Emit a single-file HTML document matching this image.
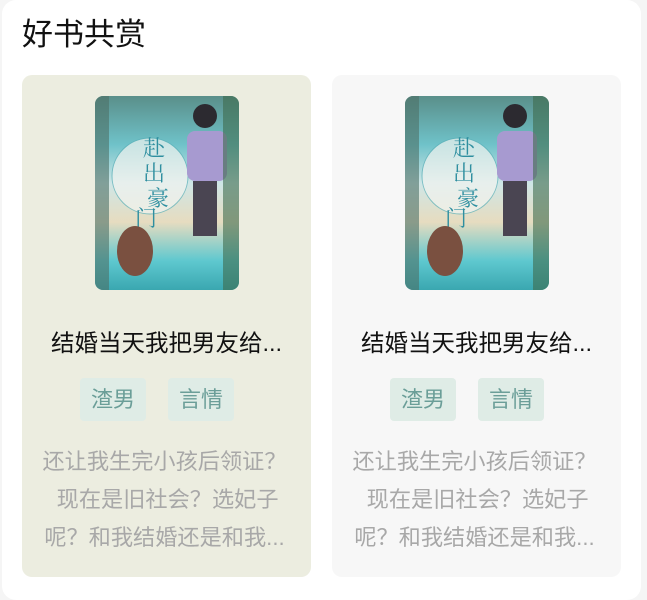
<!DOCTYPE html>
<html><head><meta charset="utf-8"><style>
*{margin:0;padding:0;box-sizing:border-box}
html,body{width:647px;height:589px;overflow:hidden;background:#f5f5f5;font-family:"Liberation Sans","Noto Sans CJK SC",sans-serif}
.panel{position:absolute;left:2px;top:0;width:639px;height:600px;background:#fff;border-radius:14px}
h1{position:absolute;left:22px;top:14px;font-size:31px;font-weight:400;color:#111;line-height:42px}
.card{position:absolute;top:75px;width:289px;height:502px;border-radius:10px;text-align:center}
.c1{left:22px;background:#ecede0}
.c2{left:332px;background:#f7f7f7}
.cover{position:absolute;left:73px;top:21px;width:144px;height:194px;border-radius:8px;overflow:hidden;
background:linear-gradient(180deg,#5a8f8a 0%,#6fc2c9 25%,#cfe6e6 45%,#e6dcc0 65%,#5ec8cf 85%,#3aa7b0 100%)}
.t{position:absolute;left:0;right:0;top:250px;font-size:23.5px;color:#111;line-height:36px}
.tags{position:absolute;top:303px;left:58px;display:flex;gap:22px}
.tag{width:66px;height:43px;line-height:43px;background:#dfece6;color:#6b9e98;font-size:22px;border-radius:4px}
.d{position:absolute;left:-4px;right:0;top:368px;font-size:22.2px;line-height:38px;color:#a8a8a8;white-space:nowrap}
</style></head><body>
<div class="panel"></div>
<h1>好书共赏</h1>
<div class="card c1">
<div class="cover"><svg width="144" height="194" viewBox="0 0 144 194">
<rect x="0" y="0" width="14" height="194" fill="#4d6f66" opacity=".6"/>
<circle cx="55" cy="80" r="38" fill="#f2f4f0" opacity=".7" stroke="#5bb0b8"/>
<text x="48" y="60" font-size="22" fill="#2f8fa0" font-family="Noto Serif CJK SC,serif">赴</text>
<text x="48" y="85" font-size="22" fill="#2f8fa0" font-family="Noto Serif CJK SC,serif">出</text>
<text x="52" y="110" font-size="22" fill="#2f8fa0" font-family="Noto Serif CJK SC,serif">豪</text>
<text x="40" y="130" font-size="22" fill="#2f8fa0" font-family="Noto Serif CJK SC,serif">门</text>
<rect x="92" y="35" width="40" height="50" rx="8" fill="#a79ad0"/>
<rect x="98" y="85" width="24" height="55" fill="#4a4552"/>
<circle cx="110" cy="20" r="12" fill="#2c2a30"/>
<ellipse cx="40" cy="155" rx="18" ry="25" fill="#7a5040"/>
<rect x="128" y="0" width="16" height="194" fill="#3d6b4d" opacity=".6"/>
</svg></div>
<div class="t">结婚当天我把男友给...</div>
<div class="tags"><div class="tag">渣男</div><div class="tag">言情</div></div>
<div class="d">还让我生完小孩后领证？<br>&nbsp;现在是旧社会？选妃子<br>呢？和我结婚还是和我...</div>
</div>
<div class="card c2">
<div class="cover"><svg width="144" height="194" viewBox="0 0 144 194">
<rect x="0" y="0" width="14" height="194" fill="#4d6f66" opacity=".6"/>
<circle cx="55" cy="80" r="38" fill="#f2f4f0" opacity=".7" stroke="#5bb0b8"/>
<text x="48" y="60" font-size="22" fill="#2f8fa0" font-family="Noto Serif CJK SC,serif">赴</text>
<text x="48" y="85" font-size="22" fill="#2f8fa0" font-family="Noto Serif CJK SC,serif">出</text>
<text x="52" y="110" font-size="22" fill="#2f8fa0" font-family="Noto Serif CJK SC,serif">豪</text>
<text x="40" y="130" font-size="22" fill="#2f8fa0" font-family="Noto Serif CJK SC,serif">门</text>
<rect x="92" y="35" width="40" height="50" rx="8" fill="#a79ad0"/>
<rect x="98" y="85" width="24" height="55" fill="#4a4552"/>
<circle cx="110" cy="20" r="12" fill="#2c2a30"/>
<ellipse cx="40" cy="155" rx="18" ry="25" fill="#7a5040"/>
<rect x="128" y="0" width="16" height="194" fill="#3d6b4d" opacity=".6"/>
</svg></div>
<div class="t">结婚当天我把男友给...</div>
<div class="tags"><div class="tag">渣男</div><div class="tag">言情</div></div>
<div class="d">还让我生完小孩后领证？<br>&nbsp;现在是旧社会？选妃子<br>呢？和我结婚还是和我...</div>
</div>
</body></html>
